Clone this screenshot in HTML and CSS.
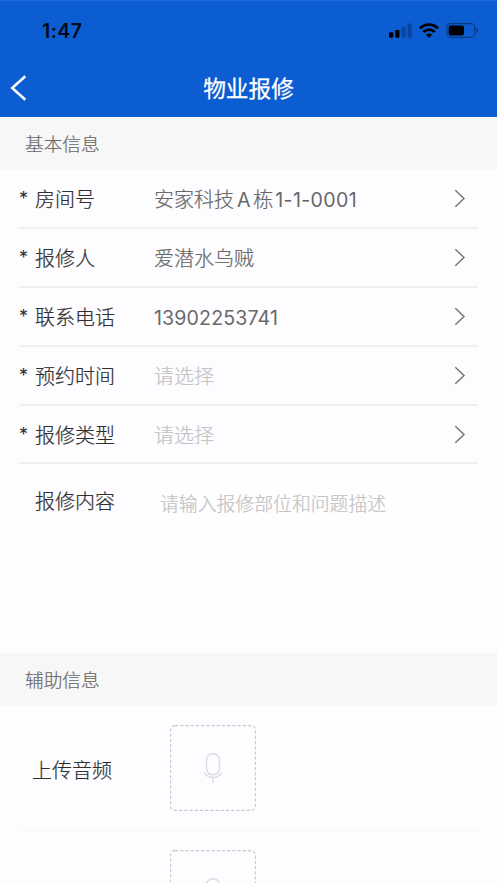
FILE: index.html
```html
<!DOCTYPE html>
<html lang="zh-CN">
<head>
<meta charset="utf-8">
<meta name="viewport" content="width=device-width, initial-scale=1">
<title>物业报修</title>
<link rel="stylesheet" href="styles.css">
</head>
<body>
<svg class="defs" aria-hidden="true">
  <symbol id="chevron" viewBox="0 0 12 19"><path d="M1.300 1.200 10 9.500l-8.700 8.300" fill="none" stroke="currentColor" stroke-width="1.500"/></symbol>
  <symbol id="mic" viewBox="0 0 20 32"><g fill="none" stroke="currentColor" stroke-width="1.500"><rect x="3.500" y="1.700" width="13" height="21" rx="6.300"/><path d="M1.200 20.700c3.500 6.300 14.100 6.300 17.600 0M10 25.500v5.300"/></g></symbol>
</svg>
<header class="header">
  <div class="status">
    <span class="time">1:47</span>
    <div class="status-icons">
      <svg class="signal" viewBox="0 0 23 15"><rect x="0" y="9.300" width="4.200" height="5.500" rx="1"/><rect x="6.200" y="7" width="4.200" height="7.800" rx="1"/><g opacity=".25"><rect x="12.500" y="3.800" width="4.200" height="11" rx="1"/><rect x="18.600" y=".5" width="4.200" height="14.300" rx="1"/></g></svg>
      <svg class="wifi" viewBox="0 0 20 15"><g fill="none" stroke="#000" stroke-width="2.700"><path d="M1 5.400C6 .4 14 .4 19 5.400"/><path d="M4.300 9c3.200-3.300 8.200-3.300 11.400 0"/></g><path d="M6.900 11.600c1.800-1.600 4.400-1.600 6.200 0L10 14.900z"/></svg>
      <svg class="battery" viewBox="0 0 33 15"><rect x=".8" y=".7" width="28" height="13.600" rx="3.800" fill="none" stroke="#000" stroke-opacity=".38" stroke-width="1.200"/><rect x="2.700" y="2.600" width="15.300" height="9.800" rx="2"/><path d="M30.300 5c2 .8 2 4.200 0 5z" opacity=".4"/></svg>
    </div>
  </div>
  <div class="nav">
    <svg class="back" viewBox="0 0 17 26"><path d="M15.300 1.200 2.200 13l13.100 11.800" fill="none" stroke="#fff" stroke-width="2.500"/></svg>
    <h1 class="title">物业报修</h1>
  </div>
</header>
<h2 class="section">基本信息</h2>
<main class="form">
  <div class="row"><span class="star">*</span><span class="label">房间号</span><span class="value">安家科技<span class="latin letter">A</span>栋<span class="latin unit">1-1-0001</span></span><svg class="chevron"><use href="#chevron"/></svg></div>
  <div class="row"><span class="star">*</span><span class="label">报修人</span><span class="value">爱潜水乌贼</span><svg class="chevron"><use href="#chevron"/></svg></div>
  <div class="row"><span class="star">*</span><span class="label">联系电话</span><span class="value"><span class="latin">13902253741</span></span><svg class="chevron"><use href="#chevron"/></svg></div>
  <div class="row"><span class="star">*</span><span class="label">预约时间</span><span class="value empty">请选择</span><svg class="chevron"><use href="#chevron"/></svg></div>
  <div class="row"><span class="star">*</span><span class="label">报修类型</span><span class="value empty">请选择</span><svg class="chevron"><use href="#chevron"/></svg></div>
  <div class="content"><span class="label">报修内容</span><div class="textarea">请输入报修部位和问题描述</div></div>
</main>
<h2 class="section">辅助信息</h2>
<div class="uploads">
  <div class="upload"><span class="upload-label">上传音频</span><div class="drop"><svg class="outline" viewBox="0 0 86 86"><rect x=".6" y=".6" width="84.800" height="84.800" rx="4.500"/></svg><svg class="mic"><use href="#mic"/></svg></div></div>
  <div class="upload"><span class="upload-label"></span><div class="drop"><svg class="outline" viewBox="0 0 86 86"><rect x=".6" y=".6" width="84.800" height="84.800" rx="4.500"/></svg><svg class="mic"><use href="#mic"/></svg></div></div>
</div>
</body>
</html>
```
FILE: styles.css
```css
* { box-sizing: border-box; }
body {
  margin: 0;
  height: 883px;
  overflow: hidden;
  display: flex;
  flex-direction: column;
  background: #fdfdff;
  color: #303033;
  font-family: "Noto Sans CJK SC", sans-serif;
  font-weight: 300;
  font-size: 20px;
  -webkit-text-stroke: .22px currentColor;
}
svg { display: block; flex: none; }
.defs { position: absolute; width: 0; height: 0; }
.header { flex: none; height: 117px; background: #0c5dd1; border-top: 1px solid #2169d4; }
.status { height: 58px; padding: 1px 19px 0 42px; display: flex; align-items: center; justify-content: space-between; }
.time { padding-top: 1px; font: 600 19.500px/24px Inter, sans-serif; color: #000a1c; letter-spacing: .4px; -webkit-text-stroke: 0; }
.status-icons { display: flex; align-items: center; }
.signal { width: 23px; height: 15px; margin-right: 7px; }
.wifi { width: 20px; height: 15px; margin-right: 7px; }
.battery { width: 33px; height: 15px; margin-right: -1px; }
.nav { height: 58px; display: grid; grid-template-columns: 60px 1fr 60px; align-items: center; }
.back { width: 17px; height: 26px; margin: -1px 0 0 10px; }
.title { margin: 0; color: #fff; font-size: 22.700px; font-weight: 400; -webkit-text-stroke: .25px #fff; line-height: 32px; text-align: center; }
.section { flex: none; margin: 0; height: 53px; padding-left: 25px; background: #f7f7f7; color: #6c6c6c; font-size: 18.700px; font-weight: 300; line-height: 52px; }
.form { flex: none; height: 483px; padding: 0 19px; }
.row { height: 58.900px; padding-top: 2px; display: flex; align-items: center; border-bottom: 2px solid #f0f0f3; }
.star { width: 16px; font: 400 18px/24px Inter, sans-serif; -webkit-text-stroke: 0; }
.label { width: 119px; line-height: 30px; }
.value { flex: 1; color: #68686a; line-height: 30px; }
.latin { font-family: Inter, sans-serif; font-weight: 400; font-size: 19.600px; letter-spacing: .12px; -webkit-text-stroke: 0; }
.letter { margin: 0 2.500px 0 3px; }
.unit { margin-left: 2px; letter-spacing: .38px; }
.empty { color: #c3c3c5; }
.chevron { width: 12px; height: 19px; margin: -1px 12px 0 0; color: #77777a; }
.content { display: flex; padding: 17px 0 0 16px; }
.content .label { padding-top: 5px; }
.textarea { flex: 1; height: 162px; margin-right: -6px; padding: 8px 6px; border-radius: 6px; background: #fefefe; color: #c3c3c5; font-size: 18.850px; line-height: 28px; }
.uploads { flex: 1; min-height: 0; overflow: hidden; padding: 0 19px; }
.upload { height: 125px; display: flex; align-items: center; padding-left: 13px; border-bottom: 1px solid #f5f5f7; }
.upload-label { width: 138px; padding-top: 2px; }
.drop { width: 86px; height: 86px; display: grid; place-items: center; }
.outline { grid-area: 1 / 1; width: 86px; height: 86px; fill: none; stroke: #c9c9cd; stroke-width: 1.100; stroke-dasharray: 3.200 2; }
.mic { grid-area: 1 / 1; width: 20px; height: 32px; color: #dcdce6; }
```
